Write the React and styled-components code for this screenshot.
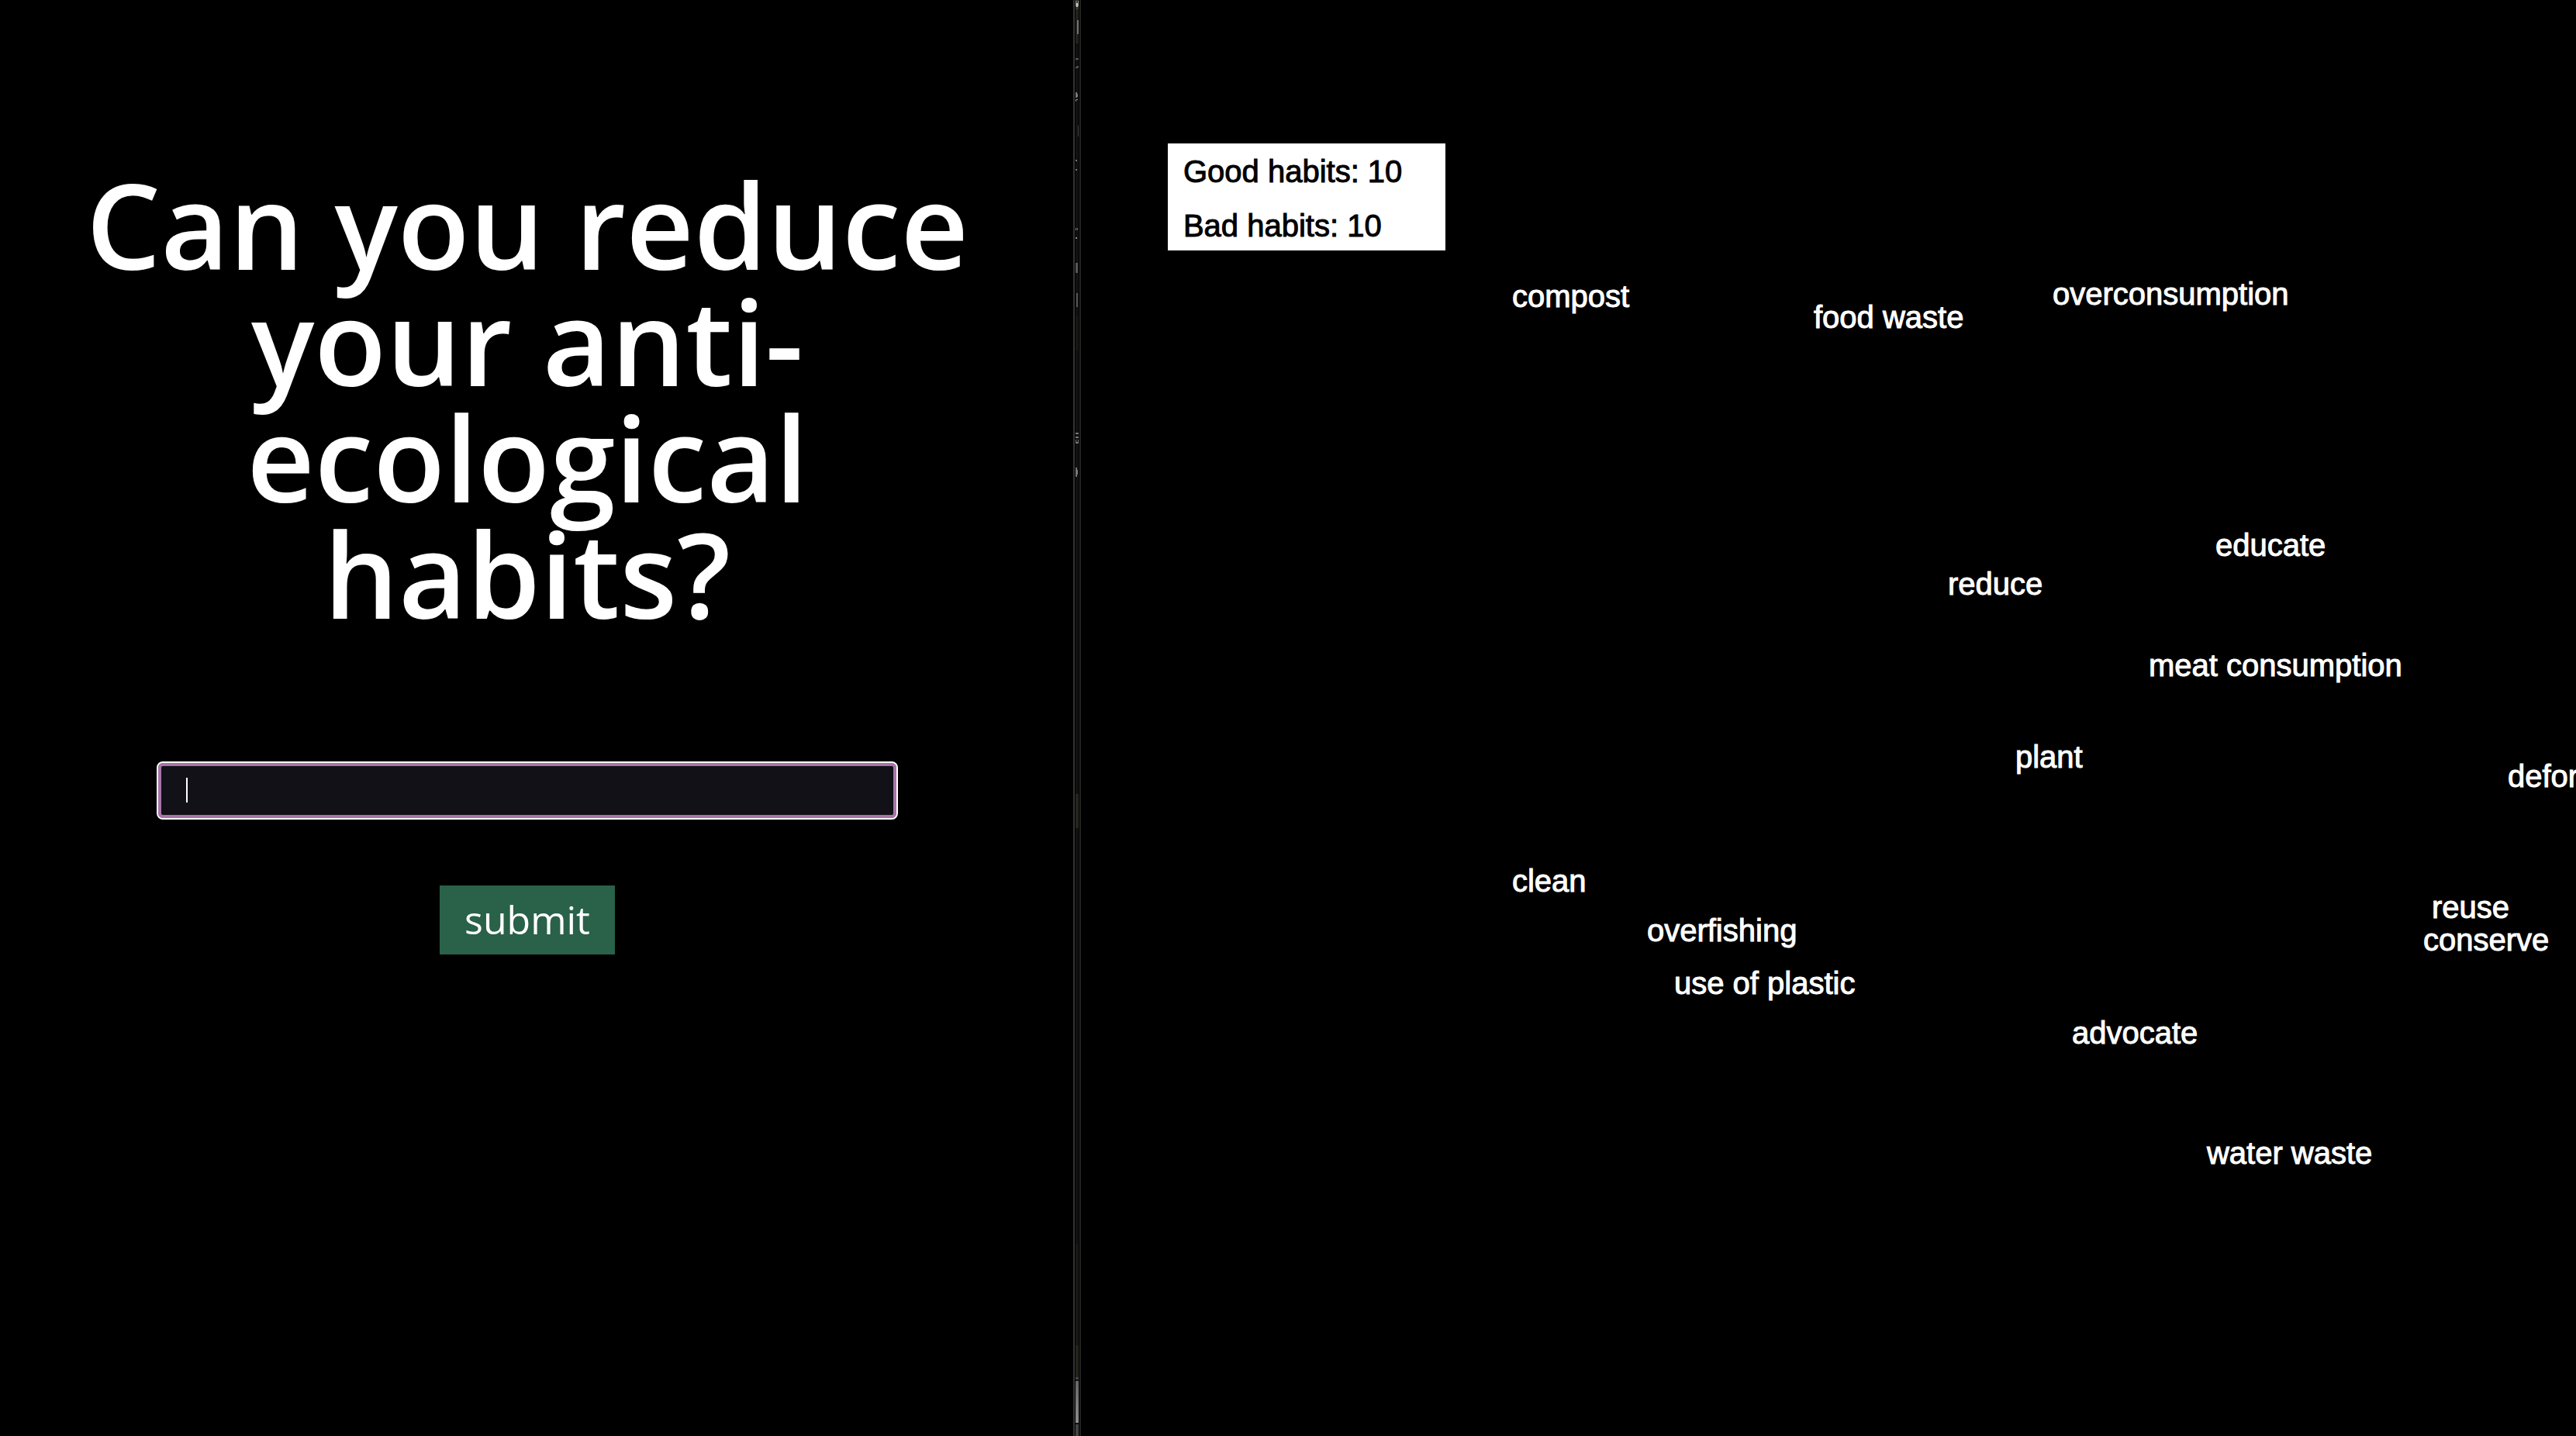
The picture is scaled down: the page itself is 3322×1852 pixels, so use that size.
import React, { useState } from "react";
import styled, { createGlobalStyle } from "styled-components";

const GlobalStyle = createGlobalStyle`
  *, *::before, *::after { box-sizing: border-box; }
  body { margin: 0; background: #000; overflow: hidden; }
`;

const Page = styled.div`
  display: flex;
  min-height: 100vh;
  overflow: hidden;
  background: #000;
  color: #fff;
`;

const Prompt = styled.main`
  flex: 0 0 41.66%;
  padding: 215px 104px 0 80px;
  display: flex;
  flex-direction: column;
  align-items: center;
  font-family: "Open Sans", "Noto Sans", sans-serif;
`;

const Title = styled.h1`
  margin: 0;
  font-size: 152px;
  line-height: 150px;
  font-weight: 600;
  text-align: center;
`;

const HabitForm = styled.form`
  width: 100%;
  margin-top: 169px;
  display: flex;
  flex-direction: column;
  align-items: center;
  gap: 87px;
`;

const Field = styled.label`
  position: relative;
  width: 952px;
  max-width: 100%;
`;

const HabitInput = styled.input`
  display: block;
  width: 100%;
  height: 71px;
  padding: 0 32px;
  border: 4px solid #a874aa;
  border-radius: 6px;
  outline: 2px solid #fff;
  background: #121117;
  color: #fff;
  caret-color: transparent;
  font: 28px "Liberation Sans", Arial, sans-serif;
`;

const Caret = styled.span`
  position: absolute;
  left: 36px;
  top: 19px;
  width: 2px;
  height: 32px;
  background: #fff;
`;

const SubmitButton = styled.button`
  padding: 0 32px;
  border: 0;
  background: #2a6149;
  color: #fff;
  font-family: inherit;
  font-size: 50px;
  line-height: 89px;
`;

const Divider = styled.svg`
  flex: 0 0 10px;
  width: 10px;
  height: 100vh;
`;

const Canvas = styled.section`
  flex: 1;
  min-width: 0;
  position: relative;
  overflow: hidden;
  padding: 185px 112px 0;
  font: 40px "Liberation Sans", Arial, sans-serif;
  -webkit-text-stroke: 1px currentColor;
`;

const ScoreCard = styled.div`
  width: 358px;
  padding: 12px 20px 8px;
  display: flex;
  flex-direction: column;
  gap: 22px;
  background: #fff;
  color: #000;
  line-height: 48px;
`;

const Word = styled.span`
  position: absolute;
  left: ${(p) => p.$x}px;
  top: ${(p) => p.$y}px;
  line-height: 40px;
  white-space: nowrap;
`;

const WORDS = [
  ["compost", 556, 362],
  ["food waste", 945, 389],
  ["overconsumption", 1253, 359],
  ["educate", 1463, 683],
  ["reduce", 1118, 733],
  ["meat consumption", 1377, 838],
  ["plant", 1205, 956],
  ["deforestation", 1840, 981],
  ["clean", 556, 1116],
  ["overfishing", 730, 1180],
  ["use of plastic", 765, 1248],
  ["reuse", 1742, 1150],
  ["conserve", 1731, 1192],
  ["advocate", 1278, 1312],
  ["water waste", 1452, 1467],
];

// Slivers of the window behind, showing between the two panes: x, y, width, height, fill.
const SLIVERS = [
  [3, 0, 4, 12, "#3a382c"],
  [3, 1, 1, 7, "#999"],
  [6, 1, 1, 7, "#999"],
  [4, 4, 2, 5, "#bbb"],
  [3, 12, 4, 44, "#22221d"],
  [5, 26, 2, 18, "#777"],
  [3, 75, 4, 2, "#555"],
  [3, 77, 1, 1, "#444"],
  [5, 85, 2, 2, "#555"],
  [3, 86, 3, 2, "#555"],
  [3, 119, 2, 7, "#777"],
  [5, 121, 1, 4, "#777"],
  [3, 128, 3, 1, "#888"],
  [3, 129, 1, 2, "#888"],
  [6, 162, 1, 14, "#444"],
  [3, 206, 2, 2, "#777"],
  [3, 218, 2, 2, "#777"],
  [3, 294, 1, 3, "#888"],
  [5, 294, 1, 3, "#666"],
  [3, 306, 2, 2, "#888"],
  [3, 339, 3, 13, "#555"],
  [4, 378, 2, 18, "#555"],
  [3, 408, 4, 44, "#171714"],
  [3, 558, 4, 2, "#777"],
  [3, 563, 4, 2, "#777"],
  [3, 567, 1, 5, "#777"],
  [6, 567, 1, 5, "#777"],
  [4, 570, 2, 2, "#777"],
  [3, 603, 2, 12, "#777"],
  [5, 606, 1, 6, "#777"],
  [3, 1024, 4, 44, "#252520"],
  [3, 1604, 4, 131, "#181815"],
  [3, 1735, 4, 41, "#24241d"],
  [3, 1776, 4, 3, "#444"],
  [3, 1781, 4, 54, "url(#thumb)"],
  [3, 1837, 4, 15, "#444"],
];

function PaneDivider() {
  return (
    <Divider aria-hidden="true">
      <defs>
        <linearGradient id="thumb" x1="0" y1="0" x2="0" y2="1">
          <stop offset="0" stopColor="#666" />
          <stop offset="1" stopColor="#8c8c8c" />
        </linearGradient>
      </defs>
      <rect x="0" width="2" height="100%" fill="#333" />
      <rect x="3" width="4" height="100%" fill="#11110f" />
      <rect x="8" width="2" height="100%" fill="#222" />
      {SLIVERS.map(([x, y, width, height, fill]) => (
        <rect key={`${x}-${y}`} x={x} y={y} width={width} height={height} fill={fill} />
      ))}
    </Divider>
  );
}

export default function App() {
  const [habit, setHabit] = useState("");
  return (
    <Page>
      <GlobalStyle />
      <Prompt>
        <Title>Can you reduce your anti-ecological habits?</Title>
        <HabitForm onSubmit={(e) => e.preventDefault()}>
          <Field>
            <HabitInput
              type="text"
              aria-label="Habit"
              value={habit}
              onChange={(e) => setHabit(e.target.value)}
            />
            {habit === "" && <Caret />}
          </Field>
          <SubmitButton type="submit">submit</SubmitButton>
        </HabitForm>
      </Prompt>
      <PaneDivider />
      <Canvas>
        <ScoreCard>
          <span>Good habits: 10</span>
          <span>Bad habits: 10</span>
        </ScoreCard>
        {WORDS.map(([text, x, y]) => (
          <Word key={text} $x={x} $y={y}>
            {text}
          </Word>
        ))}
      </Canvas>
    </Page>
  );
}
